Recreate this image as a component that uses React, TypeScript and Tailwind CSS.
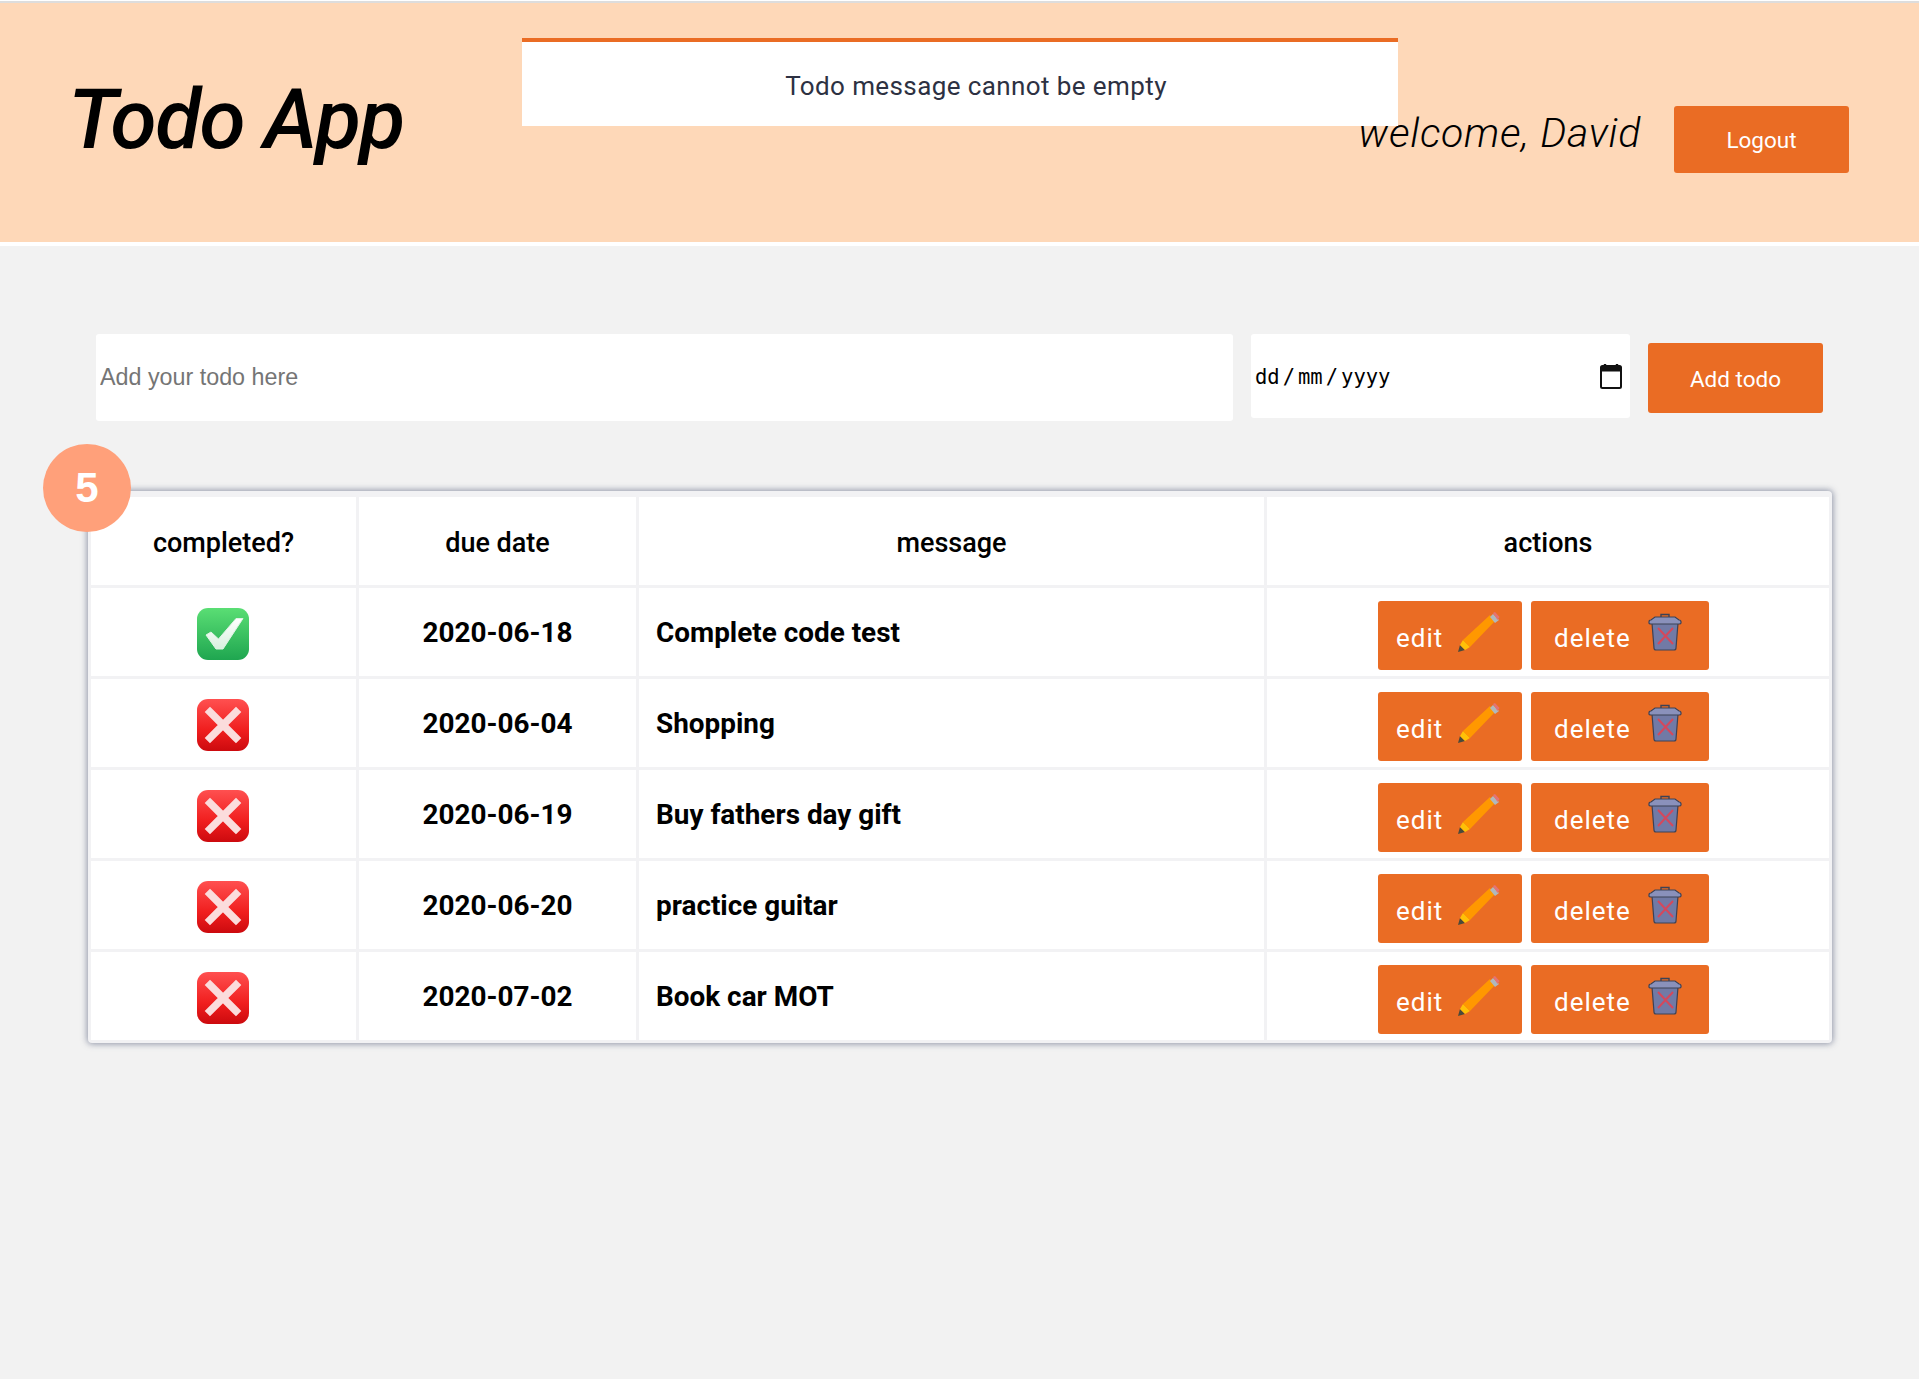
const TODOS = [
  { done: true, due: "2020-06-18", message: "Complete code test" },
  { done: false, due: "2020-06-04", message: "Shopping" },
  { done: false, due: "2020-06-19", message: "Buy fathers day gift" },
  { done: false, due: "2020-06-20", message: "practice guitar" },
  { done: false, due: "2020-07-02", message: "Book car MOT" },
];

const HEADINGS = ["completed?", "due date", "message", "actions"];

function CheckIcon() {
  return (
    <svg viewBox="0 0 52 52" className="mx-auto block h-[52px] w-[52px]">
      <defs>
        <linearGradient id="greenBox" x1="0" y1="0" x2="0" y2="1">
          <stop offset="0" stopColor="#5ade74" />
          <stop offset="1" stopColor="#1fa650" />
        </linearGradient>
        <linearGradient id="tick" x1="0" y1="0" x2="0" y2="1">
          <stop offset="0" stopColor="#ffffff" />
          <stop offset="1" stopColor="#d8f0de" />
        </linearGradient>
      </defs>
      <rect x="0" y="0" width="52" height="52" rx="11" fill="url(#greenBox)" />
      <path d="M9 27 L14 24 L21.5 31 L39 10.5 L46 10.5 L26 41 L19 41 Z" fill="url(#tick)" stroke="#def3e4" strokeWidth="1" strokeLinejoin="round" />
    </svg>
  );
}

function CrossIcon({ id }: { id: string }) {
  return (
    <svg viewBox="0 0 52 52" className="mx-auto block h-[52px] w-[52px]">
      <defs>
        <linearGradient id={id} x1="0" y1="0" x2="0" y2="1">
          <stop offset="0" stopColor="#ff5050" />
          <stop offset="0.6" stopColor="#f01e1e" />
          <stop offset="1" stopColor="#cc0a0e" />
        </linearGradient>
      </defs>
      <rect x="0" y="0" width="52" height="52" rx="11" fill={`url(#${id})`} />
      <path d="M13 13 L39 39 M39 13 L13 39" fill="none" stroke="#fbdcdc" strokeWidth="7.5" strokeLinecap="square" />
    </svg>
  );
}

function PencilIcon() {
  return (
    <svg viewBox="0 0 44 42" className="h-[42px] w-[44px] shrink-0">
      <path d="M1 41 L3 34 L8 39 Z" fill="#4a4a3a" />
      <path d="M3 34 L6 29 L13 36 L8 39 Z" fill="#ffc107" />
      <path d="M6 29 L33 4 L38 10 L13 36 Z" fill="#ff9800" />
      <path d="M33 4 L36 1 L42 7 L38 10 Z" fill="#b0b8bd" transform="translate(0 2)" />
      <path d="M37 0 L39 -1 L43.5 4 L41.5 7 Z" fill="#e57373" transform="translate(-1 2)" />
    </svg>
  );
}

function TrashIcon() {
  return (
    <svg viewBox="0 0 34 38" className="h-[38px] w-[34px] shrink-0">
      <path d="M13 4 V1.5 H21 V4" fill="none" stroke="#3c4256" strokeWidth="1.4" />
      <path d="M4 10 H30 L28 35 Q28 37 26 37 H8 Q6 37 6 35 Z" fill="#717aa6" stroke="#3c4256" strokeWidth="1.2" />
      <path d="M1 9 Q1 7 3 7 L7 4 H27 L31 7 Q33 7 33 9 V10 Q33 11 31 11 H3 Q1 11 1 10 Z" fill="#8a91bb" stroke="#3c4256" strokeWidth="1.2" />
      <path d="M10 15 L25 31 M25 15 L10 31" fill="none" stroke="#d4485c" strokeWidth="2" />
    </svg>
  );
}

function CalendarIcon() {
  return (
    <svg viewBox="0 0 22 26" className="h-[26px] w-[22px] shrink-0">
      <path d="M5 1 V4 M17 1 V4" stroke="#111" strokeWidth="2.4" fill="none" />
      <rect x="1" y="3" width="20" height="22" rx="1.5" fill="#fff" stroke="#111" strokeWidth="2" />
      <rect x="1" y="3" width="20" height="5.5" fill="#111" />
    </svg>
  );
}

export default function App() {
  return (
    <div className="min-h-[1379px] bg-[#f2f2f2] font-['Roboto',sans-serif] text-black">
      {/* Header */}
      <header className="relative mt-px flex h-[245px] items-start justify-between border-t-2 border-b-4 border-t-[#dddddd] border-b-white bg-[#fed8b8] pr-[70px] pl-[68px]">
        <h1 className="mt-[68px] text-[84px] leading-[98px] font-medium italic tracking-[-1.5px]">Todo App</h1>

        <div className="absolute top-[35px] left-[522px] flex h-[88px] w-[876px] items-center justify-center border-t-4 border-[#ea6c24] bg-white pt-[5px] pl-[32px] text-[26px] tracking-[0.4px] text-[#2d3142]">
          Todo message cannot be empty
        </div>

        <div className="mt-[103px] flex items-start">
          <span className="mt-[-3px] mr-[33px] text-[41px] leading-[60px] font-light tracking-[0.7px] italic">welcome, David</span>
          <button className="flex h-[67px] w-[175px] items-center justify-center rounded-[3px] bg-[#ea6c24] pt-[2px] text-[22.5px] text-white">
            Logout
          </button>
        </div>
      </header>

      {/* Add form */}
      <form className="flex items-start pt-[88px] pl-[96px]">
        <input
          placeholder="Add your todo here"
          className="h-[87px] w-[1137px] rounded-[3px] bg-white pb-[1px] pl-[4px] font-['Liberation_Sans',sans-serif] text-[23.3px] outline-none placeholder:text-[#757575]"
        />
        <div className="ml-[18px] flex h-[84px] w-[379px] items-center justify-between rounded-[3px] bg-white pr-[8px] pl-[4px] font-['DejaVu_Sans_Mono',monospace] text-[20.5px]">
          <span className="mt-[2px] flex items-center gap-[3px]">
            <span>dd</span>
            <span>/</span>
            <span>mm</span>
            <span>/</span>
            <span>yyyy</span>
          </span>
          <CalendarIcon />
        </div>
        <button
          type="button"
          className="mt-[9px] ml-[18px] h-[70px] w-[175px] rounded-[3px] bg-[#ea6c24] pt-[3px] text-[22.5px] text-white"
        >
          Add todo
        </button>
      </form>

      {/* Todo table */}
      <div className="relative mt-[70px] ml-[88px] w-[1744px]">
        <div className="absolute top-[-47px] left-[-45px] z-10 flex h-[88px] w-[88px] items-center justify-center rounded-full bg-[#ffa07a] pb-[2px] font-['Liberation_Sans',sans-serif] text-[42px] font-bold text-white">
          5
        </div>
        <table className="w-full table-fixed border-separate border-spacing-[3px] rounded-[4px] border-t-[3px] border-[#f2f2f4] bg-[#f2f2f4] shadow-[0_0_6px_1px_rgba(80,90,120,0.6)]">
          <colgroup>
            <col className="w-[265px]" />
            <col className="w-[277px]" />
            <col className="w-[625px]" />
            <col className="w-[562px]" />
          </colgroup>
          <thead>
            <tr>
              {HEADINGS.map((h) => (
                <th key={h} className="h-[88px] bg-white pt-[5px] text-center text-[27px] font-medium">
                  {h}
                </th>
              ))}
            </tr>
          </thead>
          <tbody>
            {TODOS.map((t, i) => (
              <tr key={t.due}>
                <td className="h-[88px] bg-white pt-[4px] pr-[2px]">
                  {t.done ? <CheckIcon /> : <CrossIcon id={`redBox${i}`} />}
                </td>
                <td className="bg-white pt-[2px] text-center text-[27.9px] font-bold">{t.due}</td>
                <td className="bg-white pt-[2px] pl-[17px] text-[27.9px] font-bold">{t.message}</td>
                <td className="bg-white pt-[13px] pb-[6px] align-top">
                  <div className="flex justify-center gap-[9px] pr-[9px] text-[26px] tracking-[1px] text-white">
                    <button className="flex h-[69px] w-[144px] items-center rounded-[3px] bg-[#ea6c24] pl-[18px]">
                      <span className="mt-[5px]">edit</span>
                      <span className="mt-[-8px] ml-[14px]">
                        <PencilIcon />
                      </span>
                    </button>
                    <button className="flex h-[69px] w-[178px] items-center rounded-[3px] bg-[#ea6c24] pl-[23px]">
                      <span className="mt-[5px]">delete</span>
                      <span className="mt-[-8px] ml-[17px]">
                        <TrashIcon />
                      </span>
                    </button>
                  </div>
                </td>
              </tr>
            ))}
          </tbody>
        </table>
      </div>
    </div>
  );
}
